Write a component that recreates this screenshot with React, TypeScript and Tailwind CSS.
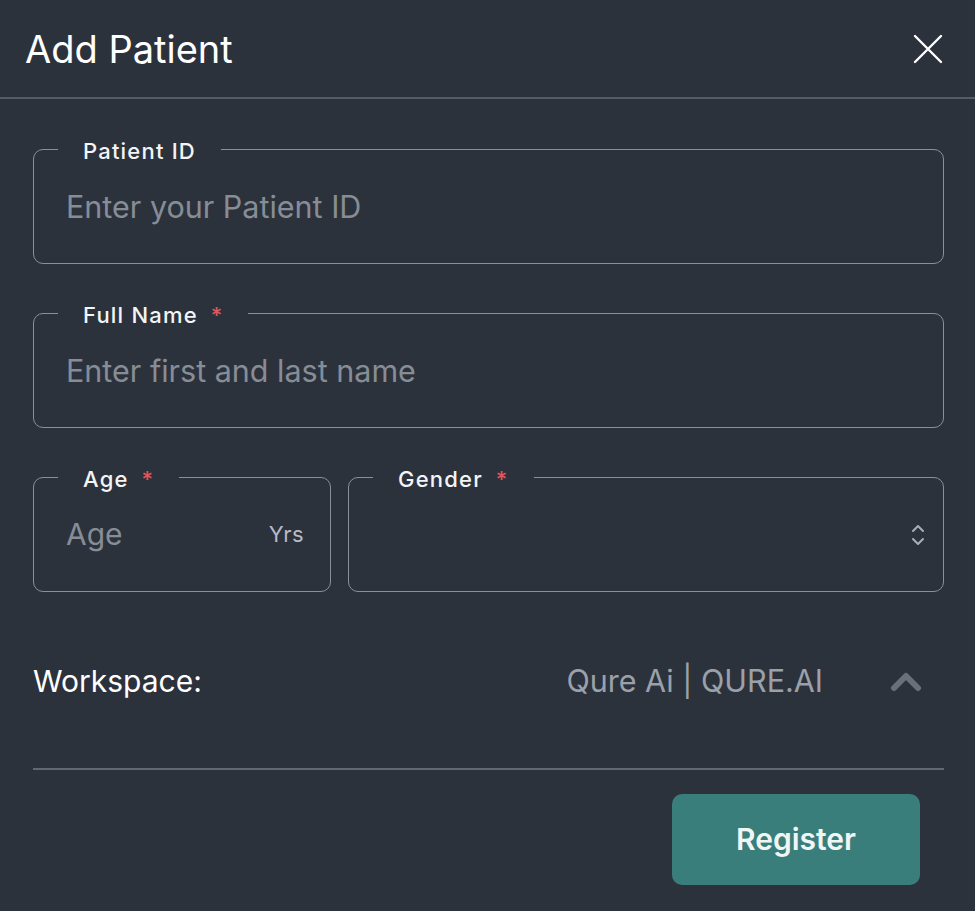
import React from "react";

function Field({
  label,
  required,
  children,
  className = "",
}: {
  label: string;
  required?: boolean;
  children: React.ReactNode;
  className?: string;
}) {
  return (
    <div
      className={
        "relative h-[115px] rounded-[10px] border-[1.5px] border-[#8a9098] " +
        className
      }
    >
      <div className="absolute -top-[13px] left-[24px] flex items-center bg-[#2c323c] px-[25px] text-[22px] leading-[28px] font-medium tracking-[1.2px] text-[#f3f4f6]">
        <span>{label}</span>
        {required && <span className="ml-[13px] text-[#e0565b]">*</span>}
      </div>
      {children}
    </div>
  );
}

export default function App() {
  return (
    <div className="min-h-screen w-full bg-[#2c323c] font-['Inter',sans-serif] text-white">
      <div className="flex h-[99px] items-center justify-between border-b-2 border-[#555b63] pl-[25px] pr-[32px]">
        <h1 className="text-[38px] font-normal leading-none text-white">Add Patient</h1>
        <svg width="30" height="30" viewBox="0 0 30 30" className="text-white">
          <path d="M2 2 L28 28 M28 2 L2 28" stroke="currentColor" strokeWidth="2.4" strokeLinecap="round" />
        </svg>
      </div>

      <div className="pl-[33px] pr-[31px] pt-[50px]">
        <div className="flex flex-col gap-[49px]">
          <Field label="Patient ID">
            <div className="flex h-full items-center pl-[32px] text-[30.5px] text-[#878d96]">
              Enter your Patient ID
            </div>
          </Field>
          <Field label="Full Name" required>
            <div className="flex h-full items-center pl-[32px] text-[30.5px] text-[#878d96]">
              Enter first and last name
            </div>
          </Field>
          <div className="flex gap-[17px]">
            <Field label="Age" required className="w-[298px] shrink-0">
              <div className="flex h-full items-center justify-between pl-[32px] pr-[26px]">
                <span className="text-[30px] text-[#878d96]">Age</span>
                <span className="text-[22px] tracking-[0.4px] text-[#b6bbc2]">Yrs</span>
              </div>
            </Field>
            <Field label="Gender" required className="flex-1">
              <div className="flex h-full items-center justify-end pr-[18px]">
                <svg width="14" height="24" viewBox="0 0 14 24" className="text-[#a9aeb5]">
                  <path d="M2 8 L7 3 L12 8 M2 16 L7 21 L12 16" fill="none" stroke="currentColor" strokeWidth="2" strokeLinecap="round" strokeLinejoin="round" />
                </svg>
              </div>
            </Field>
          </div>
        </div>

        <div className="mt-[59px] flex h-[60px] items-center justify-between">
          <span className="text-[30px] font-normal text-white">Workspace:</span>
          <div className="flex items-center">
            <span className="text-[30.5px] text-[#9ba1a9]">Qure Ai | QURE.AI</span>
            <svg width="32" height="22" viewBox="0 0 32 22" className="ml-[67px] mr-[22px] text-[#6a7079]">
              <path d="M4 18 L16 6 L28 18" fill="none" stroke="currentColor" strokeWidth="6" strokeLinecap="round" strokeLinejoin="round" />
            </svg>
          </div>
        </div>

        <div className="mt-[57px] h-[2px] w-full bg-[#62686f]" />

        <div className="flex justify-end pt-[24px] pr-[24px]">
          <button className="flex h-[91px] w-[248px] items-center justify-center rounded-[10px] bg-[#3a7e7b] text-[30px] font-semibold text-[#eef7f6]">
            Register
          </button>
        </div>
      </div>
    </div>
  );
}
